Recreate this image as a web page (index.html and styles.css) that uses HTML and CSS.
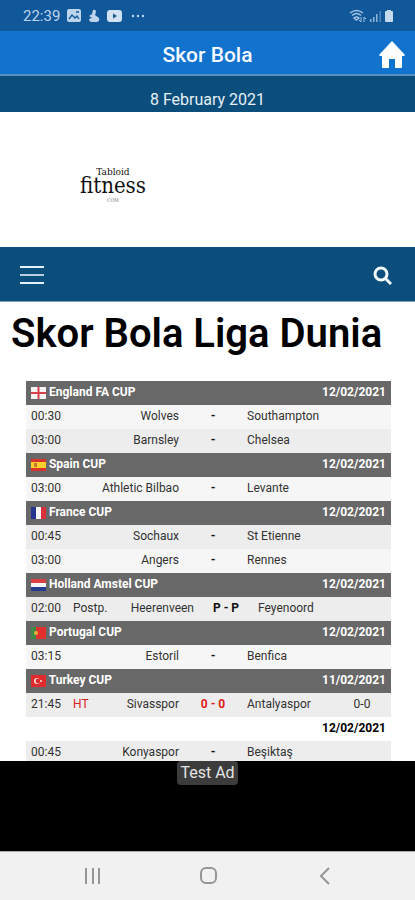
FILE: index.html
```html
<!DOCTYPE html>
<html lang="id">
<head>
    <meta charset="UTF-8">
    <meta name="viewport" content="width=device-width, initial-scale=1">
    <title>Skor Bola</title>
    <link rel="stylesheet" href="styles.css">
</head>
<body>
<div class="statusBar">
    <div class="statusLeft">
        <span>22:39</span>
        <svg width="14" height="14" viewBox="0 0 14 14">
            <rect width="14" height="13" rx="2" fill="#bdd5ec"/>
            <path d="M2 10l3-4 3 3 2-2 2 3M9 3h3" stroke="#11589b" stroke-width="1.3" fill="none"/>
        </svg>
        <svg width="12" height="14" viewBox="0 0 12 14" fill="#bdd5ec">
            <path d="M5 1q3-1 3 2L7 6l4 3q1 3-2 4H4q-3 0-3-3l3-1-3-2 3-2z"/>
        </svg>
        <svg width="15" height="12" viewBox="0 0 15 12">
            <rect width="15" height="12" rx="3" fill="#d0e2f3"/>
            <path d="M6 3.500l4 2.500-4 2.500z" fill="#11589b"/>
        </svg>
        <svg class="dots" width="18" height="4" viewBox="0 0 18 4" fill="#bdd5ec">
            <circle cx="4" cy="2" r="1.200"/><circle cx="9" cy="2" r="1.200"/><circle cx="14" cy="2" r="1.200"/>
        </svg>
    </div>
    <div class="statusRight">
        <svg width="18" height="14" viewBox="0 0 18 14">
            <path d="M1 4q6.500-5 13 0M3 6.500q4.500-4 9 0M5 9q2.500-2 5 0l-2.500 2z" stroke="#9dc0e2" stroke-width="1.500" fill="none"/>
            <path d="M12 8v5M10 11l2 2M15 13V8M17 10l-2-2" stroke="#9dc0e2" fill="none"/>
        </svg>
        <svg width="13" height="12" viewBox="0 0 13 12" fill="#8fb5da">
            <path d="M1 9h1.500v3H1zM4 7h1.500v5H4zM7 4h1.500v8H7z"/>
            <path d="M10.500 1H12v11h-1.500z" opacity=".5"/>
        </svg>
        <svg width="10" height="12" viewBox="0 0 10 12" fill="#c3daef">
            <path d="M3 0h4v1h1q1 0 1 1v9q0 1-1 1H2q-1 0-1-1V2q0-1 1-1h1z"/>
        </svg>
    </div>
</div>
<header class="appBar">
    <h2>Skor Bola</h2>
    <a class="homeLink" href="#" aria-label="Home">
        <svg width="26" height="28" viewBox="0 0 26 28" fill="#fff">
            <path d="M13 0L0 14l1 1h2v11q0 1 1 1h6v-9h6v9h6q1 0 1-1V15h2l1-1z"/>
        </svg>
    </a>
</header>
<div class="dateBar">8 February 2021</div>
<div class="banner">
    <a class="logo" href="#">
        <span class="logoTop">Tabloid</span>
        <span class="logoName">fitness</span>
        <span class="logoEnd">COM</span>
    </a>
</div>
<nav class="menu">
    <button type="button" aria-label="Menu">
        <svg width="24" height="20" viewBox="0 0 24 20" stroke="#e4f1f8" stroke-width="2">
            <path d="M0 2h24M0 18h24"/>
            <path d="M0 10h24" opacity=".8"/>
        </svg>
    </button>
    <button type="button" aria-label="Search">
        <svg width="19" height="19" viewBox="0 0 19 19" fill="none" stroke="#f3fafd" stroke-width="3">
            <circle cx="8" cy="8" r="6"/>
            <path d="M12 12l6 6"/>
        </svg>
    </button>
</nav>
<main>
    <h1>Skor Bola Liga Dunia</h1>
    <div class="scores">
        <table>
            <colgroup><col class="time"><col class="state"><col class="home"><col class="score"><col><col class="half"></colgroup>
            <tr class="league">
                <th colspan="4">
                    <svg class="flag" viewBox="0 0 15 12"><rect width="15" height="12" fill="#f6f2f2"/><path d="M0 6h15M7.500 0v12" stroke="#d8404b" stroke-width="2"/></svg>
                    England FA CUP
                </th>
                <th colspan="2" class="date">12/02/2021</th>
            </tr>
            <tr><td>00:30</td><td></td><td class="right">Wolves</td><td class="result">-</td><td>Southampton</td><td></td></tr>
            <tr class="dark"><td>03:00</td><td></td><td class="right">Barnsley</td><td class="result">-</td><td>Chelsea</td><td></td></tr>
        </table>
        <table>
            <colgroup><col class="time"><col class="state"><col class="home"><col class="score"><col><col class="half"></colgroup>
            <tr class="league">
                <th colspan="4">
                    <svg class="flag" viewBox="0 0 15 12"><rect width="15" height="12" fill="#d8322c"/><path d="M0 3h15v6H0z" fill="#f9cf2c"/><path d="M3 4h3v4H3z" fill="#c9782c"/></svg>
                    Spain CUP
                </th>
                <th colspan="2" class="date">12/02/2021</th>
            </tr>
            <tr><td>03:00</td><td></td><td class="right">Athletic Bilbao</td><td class="result">-</td><td>Levante</td><td></td></tr>
        </table>
        <table>
            <colgroup><col class="time"><col class="state"><col class="home"><col class="score"><col><col class="half"></colgroup>
            <tr class="league">
                <th colspan="4">
                    <svg class="flag" viewBox="0 0 15 12"><rect width="15" height="12" fill="#f4f4f8"/><path d="M0 0h5v12H0z" fill="#27348f"/><path d="M10 0h5v12h-5z" fill="#d9303c"/></svg>
                    France CUP
                </th>
                <th colspan="2" class="date">12/02/2021</th>
            </tr>
            <tr class="dark"><td>00:45</td><td></td><td class="right">Sochaux</td><td class="result">-</td><td>St Etienne</td><td></td></tr>
            <tr><td>03:00</td><td></td><td class="right">Angers</td><td class="result">-</td><td>Rennes</td><td></td></tr>
        </table>
        <table class="wide">
            <colgroup><col class="time"><col class="state"><col class="home"><col class="score"><col><col class="half"></colgroup>
            <tr class="league">
                <th colspan="4">
                    <svg class="flag" viewBox="0 0 15 12"><rect width="15" height="12" fill="#f4f4f8"/><path d="M0 0h15v4H0z" fill="#d93f45"/><path d="M0 8h15v4H0z" fill="#233c8e"/></svg>
                    Holland Amstel CUP
                </th>
                <th colspan="2" class="date">12/02/2021</th>
            </tr>
            <tr class="dark"><td>02:00</td><td>Postp.</td><td class="right">Heerenveen</td><td class="result">P - P</td><td>Feyenoord</td><td></td></tr>
        </table>
        <table>
            <colgroup><col class="time"><col class="state"><col class="home"><col class="score"><col><col class="half"></colgroup>
            <tr class="league">
                <th colspan="4">
                    <svg class="flag" viewBox="0 0 15 12"><rect width="15" height="12" fill="#e02f2c"/><path d="M0 0h5v12H0z" fill="#3f8a48"/><circle cx="5" cy="6" r="2" fill="#e5b23c"/></svg>
                    Portugal CUP
                </th>
                <th colspan="2" class="date">12/02/2021</th>
            </tr>
            <tr><td>03:15</td><td></td><td class="right">Estoril</td><td class="result">-</td><td>Benfica</td><td></td></tr>
        </table>
        <table>
            <colgroup><col class="time"><col class="state"><col class="home"><col class="score"><col><col class="half"></colgroup>
            <tr class="league">
                <th colspan="4">
                    <svg class="flag" viewBox="0 0 15 12"><rect width="15" height="12" fill="#e02b2c"/><circle cx="6" cy="6" r="3" fill="#fbe6e4"/><circle cx="7" cy="6" r="2.400" fill="#e02b2c"/><circle cx="10" cy="6" r="1" fill="#fbe6e4"/></svg>
                    Turkey CUP
                </th>
                <th colspan="2" class="date">11/02/2021</th>
            </tr>
            <tr class="dark"><td>21:45</td><td class="live">HT</td><td class="right">Sivasspor</td><td class="result live">0 - 0</td><td>Antalyaspor</td><td class="center">0-0</td></tr>
            <tr class="day"><th colspan="6" class="date">12/02/2021</th></tr>
            <tr class="dark"><td>00:45</td><td></td><td class="right">Konyaspor</td><td class="result">-</td><td>Beşiktaş</td><td></td></tr>
        </table>
    </div>
</main>
<div class="ad"><span>Test Ad</span></div>
<footer>
    <button type="button" aria-label="Recent apps">
        <svg width="18" height="18" viewBox="0 0 18 18" stroke="#969696" stroke-width="2"><path d="M2 1v16M9 1v16M15 1v16"/></svg>
    </button>
    <button type="button" aria-label="Home screen">
        <svg width="18" height="18" viewBox="0 0 18 18" fill="none" stroke="#969696" stroke-width="2"><rect x="1" y="1" width="15" height="15" rx="5"/></svg>
    </button>
    <button type="button" aria-label="Back">
        <svg width="18" height="18" viewBox="0 0 18 18" fill="none" stroke="#969696" stroke-width="2"><path d="M13 1L5 9l8 8"/></svg>
    </button>
</footer>
</body>
</html>
```
FILE: styles.css
```css
:root {
    --navy: #0c4e7b;
    --gray: #686868;
}

* {
    box-sizing: border-box;
}

body {
    display: flex;
    flex-direction: column;
    height: 100vh;
    margin: 0;
    background-color: #fff;
    font-family: Roboto, sans-serif;
}

svg {
    display: block;
}

button {
    background: none;
    border: none;
    padding: 0;
    cursor: pointer;
}

.statusBar {
    display: flex;
    flex: none;
    align-items: center;
    justify-content: space-between;
    height: 31px;
    padding: 0 21px 0 23px;
    background-color: #11589b;
    color: #bdd5ec;
    font-size: 15px;
}

.statusLeft {
    display: flex;
    align-items: center;
    gap: 7px;
}

.statusRight {
    display: flex;
    align-items: center;
    gap: 2px;
}

.appBar {
    display: grid;
    grid-template-columns: 1fr auto 1fr;
    flex: none;
    align-items: center;
    height: 45px;
    padding: 4px 10px 0;
    background-color: #1273cf;
    border-bottom: 2px solid #5590c0;
}

.appBar h2 {
    grid-column: 2;
    margin: 0;
    color: #f4faff;
    font-size: 21px;
    font-weight: 500;
}

.homeLink {
    justify-self: end;
}

.dateBar {
    flex: none;
    height: 36px;
    padding-top: 12px;
    background-color: var(--navy);
    color: #e6f0f7;
    font-size: 16px;
    line-height: 24px;
    text-align: center;
}

.banner {
    flex: none;
    height: 135px;
    padding: 48px 80px 0;
}

.logo {
    display: inline-flex;
    flex-direction: column;
    align-items: center;
    color: #111;
    font-family: "DejaVu Serif Condensed", "DejaVu Serif", serif;
    text-decoration: none;
}

.logoTop {
    font-size: 10px;
    line-height: 10px;
}

.logoName {
    font-size: 22px;
    line-height: 18px;
}

.logoEnd {
    color: #777;
    font-size: 5px;
    line-height: 10px;
}

.menu {
    display: flex;
    flex: none;
    align-items: center;
    justify-content: space-between;
    height: 55px;
    padding: 2px 23px 0 20px;
    background-color: var(--navy);
    border-bottom: 1px solid #7fa3bb;
}

main {
    flex: 1;
    min-height: 0;
    overflow: hidden;
}

h1 {
    margin: 8px 11px 24px;
    font-size: 40px;
    font-weight: 600;
    line-height: 47px;
    white-space: nowrap;
}

.scores {
    margin: 0 24px 0 26px;
}

table {
    width: 100%;
    border-collapse: collapse;
    table-layout: fixed;
    color: #333;
    font-size: 12px;
}

tr {
    height: 24px;
    background-color: #f6f6f6;
}

.dark {
    background-color: #ededed;
}

td, th {
    padding: 0 5px 2px;
    text-align: left;
    white-space: nowrap;
}

.time {
    width: 42px;
}

.state {
    width: 32px;
}

.home {
    width: 84px;
}

.score, .half {
    width: 58px;
}

.wide .state {
    width: 42px;
}

.wide .home {
    width: 89px;
}

.wide .score {
    width: 54px;
}

.league {
    background-color: var(--gray);
    color: #fff;
}

.flag {
    display: inline-block;
    width: 15px;
    height: 12px;
    vertical-align: -3px;
}

.day {
    background-color: #fff;
    color: #000;
}

td.right {
    padding-left: 0;
    text-align: right;
}

.league .date, .day .date {
    text-align: right;
}

.result {
    color: #111;
    font-weight: bold;
    text-align: center;
}

.center {
    text-align: center;
}

.live {
    color: #e02020;
}

.ad {
    flex: none;
    height: 90px;
    background-color: #000;
    text-align: center;
}

.ad span {
    display: inline-block;
    padding: 1px 3px;
    background-color: #3c3c3c;
    border-radius: 4px;
    color: #e4e4e4;
    font-size: 16px;
    line-height: 22px;
}

footer {
    display: flex;
    flex: none;
    align-items: center;
    justify-content: space-between;
    height: 49px;
    padding: 0 81px 0 84px;
    background-color: #f1f1f1;
    border-top: 1px solid #aaa;
}
```
